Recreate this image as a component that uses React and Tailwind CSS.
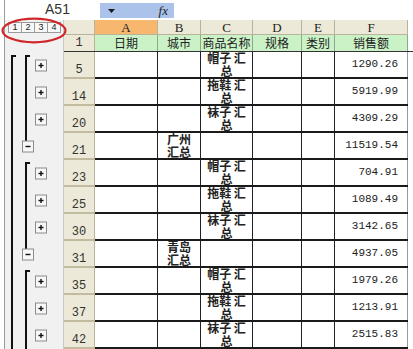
import React from 'react';

const cols = [
    { key: 'a', letter: 'A', label: '日期', w: 'w-[63px]' },
    { key: 'b', letter: 'B', label: '城市', w: 'w-[43px]' },
    { key: 'c', letter: 'C', label: '商品名称', w: 'w-[52px]' },
    { key: 'd', letter: 'D', label: '规格', w: 'w-[49px]' },
    { key: 'e', letter: 'E', label: '类别', w: 'w-[33px]' },
    { key: 'f', letter: 'F', label: '销售额', w: 'w-[73px]' },
];

const rows = [
    { n: 5, c: '帽子 汇总', f: '1290.26' },
    { n: 14, c: '拖鞋 汇总', f: '5919.99' },
    { n: 20, c: '袜子 汇总', f: '4309.29' },
    { n: 21, b: '广州汇总', f: '11519.54' },
    { n: 23, c: '帽子 汇总', f: '704.91' },
    { n: 25, c: '拖鞋 汇总', f: '1089.49' },
    { n: 30, c: '袜子 汇总', f: '3142.65' },
    { n: 31, b: '青岛汇总', f: '4937.05' },
    { n: 35, c: '帽子 汇总', f: '1979.26' },
    { n: 37, c: '拖鞋 汇总', f: '1213.91' },
    { n: 42, c: '袜子 汇总', f: '2515.83' },
];

// outline svg starts at page y=35, x=5
const plusRows = [65.5, 92.5, 119.5, 173.5, 200.5, 227.5, 281.5, 308.5, 335.5];
const minusRows = [146.5, 254.5];

const OutlineButton = ({ x, cy, minus }) => {
    const y = cy - 35 - 5.5;
    const mx = x + 5.5;
    const my = y + 5.5;
    return (
        <g>
            <rect x={x} y={y} width="11" height="11" fill="#f7f7f7" stroke="#8c8c8c" strokeWidth="1" />
            <line x1={mx - 2.5} y1={my} x2={mx + 2.5} y2={my} stroke="#111" strokeWidth="1.4" />
            {!minus && <line x1={mx} y1={my - 2.5} x2={mx} y2={my + 2.5} stroke="#111" strokeWidth="1.4" />}
        </g>
    );
};

const Cell = ({ w, children, className = '' }) => (
    <div className={`${w} shrink-0 h-full border-r border-[#222] ${className}`}>{children}</div>
);

const App = () => {
    return (
        <div className="relative w-[413px] h-[349px] overflow-hidden bg-white pl-[4px] font-['Liberation_Sans','Noto_Sans_CJK_SC',sans-serif] text-[#222]">
            <div className="h-full border-l border-[#9c9c9c] flex flex-col">

                {/* Formula bar */}
                <div className="h-[20px] shrink-0 flex items-start">
                    <div className="w-[95px] h-[19px] flex items-center justify-center pl-[10px] text-[14px] text-[#333]">A51</div>
                    <div className="w-[74px] h-[15px] mt-[3px] bg-[#abc2ea] flex items-center pl-[8px]">
                        <svg width="7" height="4" viewBox="0 0 7 4"><polygon points="0,0 7,0 3.5,4" fill="#1a1a1a" /></svg>
                        <span className="ml-auto mr-[6px] italic font-['Liberation_Serif',serif] text-[13px] leading-none text-[#222]">fx</span>
                    </div>
                </div>

                <div className="flex flex-1 min-h-0">
                    {/* Outline column */}
                    <div className="w-[59px] shrink-0 bg-[#f1f1f1] border-r border-[#c8c8c8] flex flex-col">
                        <div className="h-[15px] shrink-0 flex items-center pl-[3px]">
                            {['1', '2', '3', '4'].map(l => (
                                <div key={l} className="w-[14px] h-[11px] border border-[#9a9a9a] bg-[#f8f8f8] flex items-center justify-center text-[9px] leading-none text-[#222] -ml-px first:ml-0">{l}</div>
                            ))}
                        </div>
                        <svg width="59" height="314" className="block">
                            {/* level 2 bracket */}
                            <path d="M11 21 H7 V314" fill="none" stroke="#111" strokeWidth="2" />
                            {/* level 3 brackets */}
                            <path d="M25 21 H21 V107" fill="none" stroke="#111" strokeWidth="2" />
                            <path d="M25 128 H21 V214" fill="none" stroke="#111" strokeWidth="2" />
                            <path d="M25 236 H21 V314" fill="none" stroke="#111" strokeWidth="2" />
                            {minusRows.map(cy => <OutlineButton key={cy} x={17.5} cy={cy} minus />)}
                            {plusRows.map(cy => <OutlineButton key={cy} x={30.5} cy={cy} />)}
                        </svg>
                    </div>

                    {/* Sheet */}
                    <div className="flex flex-col flex-1 min-w-0">
                        {/* Column headers */}
                        <div className="h-[15px] shrink-0 flex font-['Liberation_Serif',serif] text-[13px] leading-none">
                            <div className="w-[31px] shrink-0 h-full bg-[#ece9d8] border-r border-b border-[#b9b39b]" />
                            {cols.map(c => (
                                <div key={c.key} className={`${c.w} shrink-0 h-full flex items-center justify-center border-r border-b border-[#b9b39b] ${c.key === 'a' ? 'bg-[#f8b76f]' : 'bg-[#ece9d8]'}`}>
                                    {c.letter}
                                </div>
                            ))}
                        </div>

                        {/* Row 1 */}
                        <div className="h-[17px] shrink-0 flex border-b border-[#333]">
                            <div className="w-[31px] shrink-0 h-full bg-[#ece9d8] border-r border-[#b9b39b] flex items-center justify-center font-['Liberation_Mono',monospace] text-[12px] text-[#333]">1</div>
                            {cols.map(c => (
                                <div key={c.key} className={`${c.w} shrink-0 h-full bg-[#cbf2c6] border-r border-[#8fa98c] flex items-center justify-center text-[12px] leading-none font-['Noto_Sans_CJK_SC',sans-serif]`}>
                                    {c.label}
                                </div>
                            ))}
                        </div>

                        {/* Data rows */}
                        {rows.map(r => (
                            <div key={r.n} className="h-[27px] shrink-0 flex">
                                <div className="w-[31px] shrink-0 h-full bg-[#ece9d8] border-r border-[#b9b39b] border-b-2 border-b-[#c2bb9f] flex items-end justify-center pb-[1px] font-['Liberation_Mono',monospace] text-[12px] leading-none text-[#333]">
                                    {r.n}
                                </div>
                                <div className="flex h-full border-b-2 border-[#1a1a1a]">
                                    <Cell w="w-[63px]" />
                                    <Cell w="w-[43px]" className="flex justify-center">
                                        {r.b && <p className="w-[25px] text-center font-['Noto_Sans_CJK_SC',sans-serif] font-bold text-[12px] leading-[12.5px]">{r.b}</p>}
                                    </Cell>
                                    <Cell w="w-[52px]" className="flex justify-center">
                                        {r.c && <p className="w-[46px] text-center font-['Noto_Sans_CJK_SC',sans-serif] font-bold text-[12px] leading-[12.5px]">{r.c}</p>}
                                    </Cell>
                                    <Cell w="w-[49px]" />
                                    <Cell w="w-[33px]" />
                                    <div className="w-[73px] shrink-0 h-full border-r border-[#9a9a9a] flex items-center justify-end pr-[9px] font-['Liberation_Mono',monospace] text-[11px] leading-none text-[#222]">
                                        {r.f}
                                    </div>
                                </div>
                            </div>
                        ))}
                    </div>
                </div>
            </div>

            {/* Red ring around outline level buttons */}
            <svg className="absolute left-[1px] top-[17px] pointer-events-none" width="67" height="27" viewBox="0 0 67 27">
                <ellipse cx="33" cy="13.5" rx="31.5" ry="11.8" fill="none" stroke="#d0262a" strokeWidth="2.2" />
            </svg>
        </div>
    );
};

export default App;
